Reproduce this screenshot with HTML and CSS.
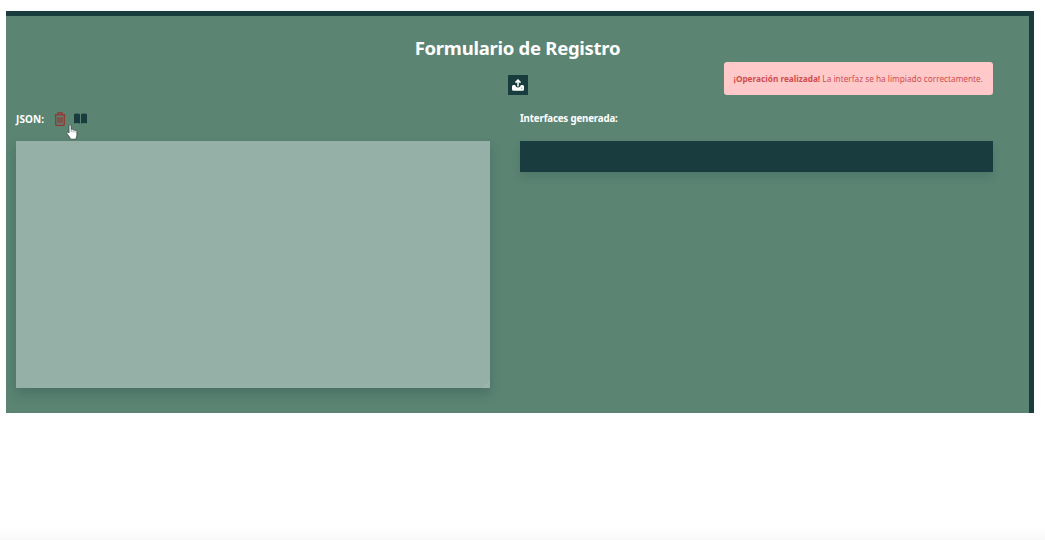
FILE: index.html
```html
<!DOCTYPE html>
<html lang="es">
<head>
<meta charset="utf-8">
<title>Formulario de Registro</title>
<link rel="stylesheet" href="styles.css">
</head>
<body>
<main class="panel">
  <h1 class="title"><span>Formulario de Registro</span></h1>
  <button class="upload" aria-label="Subir">
    <svg width="12" height="12" viewBox="0 0 12 12"><path d="M1.400 6h1.800c.2 1.500 1.100 2.400 2.800 2.400S8.600 7.500 8.800 6h1.800q1.400 0 1.400 1.500v2.700q0 1.500-1.500 1.500h-9Q0 11.700 0 10.200V7.500Q0 6 1.400 6z" fill="#fff"/><path d="M6 7.600V1.200M3.500 3.600 6 1.100l2.500 2.500" fill="none" stroke="#fff" stroke-width="1.500"/><circle cx="9.800" cy="9.200" r=".6" fill="#5b8473"/></svg>
  </button>
  <div class="columns">
    <section class="column">
      <div class="label-row">
        <label class="label json-label" for="json">JSON:</label>
        <svg class="trash" width="12" height="14" viewBox="0 0 12 14" fill="none" stroke="#943530" stroke-width="1.200"><path d="M.7 2.900h10.600M3.800 2.700V.8h4.400v1.900M1.700 3.200v9.200q0 1 1 1h6.600q1 0 1-1V3.200M4 5v6.300M6 5v6.300M8 5v6.300"/></svg>
        <svg class="book" width="13" height="11" viewBox="0 0 13 11" fill="#193c3e"><path d="M.7.7Q3.500 0 6 .9V10.600Q3.500 9.700.7 10.300Q0 10.400 0 9.700V1.400Q0 .8.7.7zM12.300.7Q9.500 0 7 .9v9.700q2.500-.9 5.300-.3.700.1.700-.6V1.400q0-.6-.7-.7z"/></svg>
      </div>
      <div class="input-wrap">
        <textarea class="input" id="json"></textarea>
        <svg class="grip" width="7" height="7" viewBox="0 0 7 7" fill="none" stroke="#bccdc6" stroke-width=".9" stroke-dasharray="1 .6"><path d="M1 6.500 6.500 1M4 6.500 6.500 4"/></svg>
      </div>
    </section>
    <section class="column">
      <div class="label-row"><span class="label output-label">Interfaces generada:</span></div>
      <div class="output"></div>
    </section>
  </div>
</main>
<div class="alert" role="alert"><span><strong>¡Operación realizada!</strong> La interfaz se ha limpiado correctamente.</span></div>
<svg class="cursor" width="12" height="16" viewBox="0 0 12 16"><path d="M3 9V1.900C3 .3 5.200.3 5.200 1.900v3.500c.9-.6 1.700-.2 1.900.4.800-.4 1.600-.1 1.800.6 1-.4 2 .1 2 1.300v3.100c0 1.500-.7 2.200-.9 4.400H4.400C4.200 13.600 2.600 12 1.100 9.700.2 8.200 1.700 7.400 3 9z" fill="#fff" stroke="#34463f" stroke-width=".8"/><path d="M5.200 5.500v2.600M7.100 6v2.300M8.900 6.500v2" stroke="#66736e" stroke-width=".6"/></svg>
<div class="bottom-shade"></div>
</body>
</html>
```
FILE: styles.css
```css
* { box-sizing: border-box; }
body {
  margin: 0;
  height: 540px;
  padding: 10.500px 11px 0 6px;
  overflow: hidden;
  background: #fff;
  font-family: "Noto Sans", "Open Sans", sans-serif;
  color: #fff;
}
.panel {
  height: 402.500px;
  padding: 19px 35px 0 10px;
  background: #5b8473;
  border-top: 5px solid #193c3e;
  border-right: 5px solid #193c3e;
  display: flex;
  flex-direction: column;
}
.title {
  margin: 0 -25px 0 0;
  height: 26px;
  font-size: 18.500px;
  line-height: 26px;
  font-weight: 700;
  letter-spacing: -.27px;
  text-align: center;
}
.upload {
  width: 20px;
  height: 20px;
  margin: 14px -25px 0 0;
  padding: 0;
  border: 0;
  background: #193c3e;
  align-self: center;
  display: grid;
  place-items: center;
}
.columns {
  margin-top: 15px;
  display: grid;
  grid-template-columns: 473.500px 473px;
  column-gap: 30.500px;
}
.label-row {
  height: 18px;
  display: flex;
  align-items: center;
}
.label {
  font-size: 9.700px;
  line-height: 18px;
  font-weight: 700;
  white-space: nowrap;
}
.json-label {
  width: 38px;
  font-size: 10px;
  letter-spacing: .1px;
}
.output-label { letter-spacing: -.15px; }
.book { margin-left: 8px; }
.input-wrap {
  position: relative;
  margin-top: 13.500px;
}
.input {
  display: block;
  width: 100%;
  height: 246.500px;
  margin: 0;
  border: 0;
  outline: 0;
  resize: none;
  background: #95b0a7;
  box-shadow: 0 6px 10px rgba(25, 60, 62, .25);
}
.grip {
  position: absolute;
  right: 0;
  bottom: 0;
}
.output {
  height: 31px;
  margin-top: 13.500px;
  background: #193c3e;
  box-shadow: 0 5px 8px rgba(25, 60, 62, .16);
}
.alert {
  position: absolute;
  left: 723.500px;
  top: 62px;
  width: 269.500px;
  height: 33px;
  border-radius: 3px;
  background: #ffc9c9;
  color: #d04c4e;
  font-size: 8.250px;
  line-height: 33px;
  text-align: center;
  white-space: nowrap;
}
.cursor {
  position: absolute;
  left: 66px;
  top: 124px;
}
.bottom-shade {
  position: absolute;
  left: 0;
  right: 0;
  bottom: 0;
  height: 12px;
  background: linear-gradient(#fff, #f8f8f8);
}
```
